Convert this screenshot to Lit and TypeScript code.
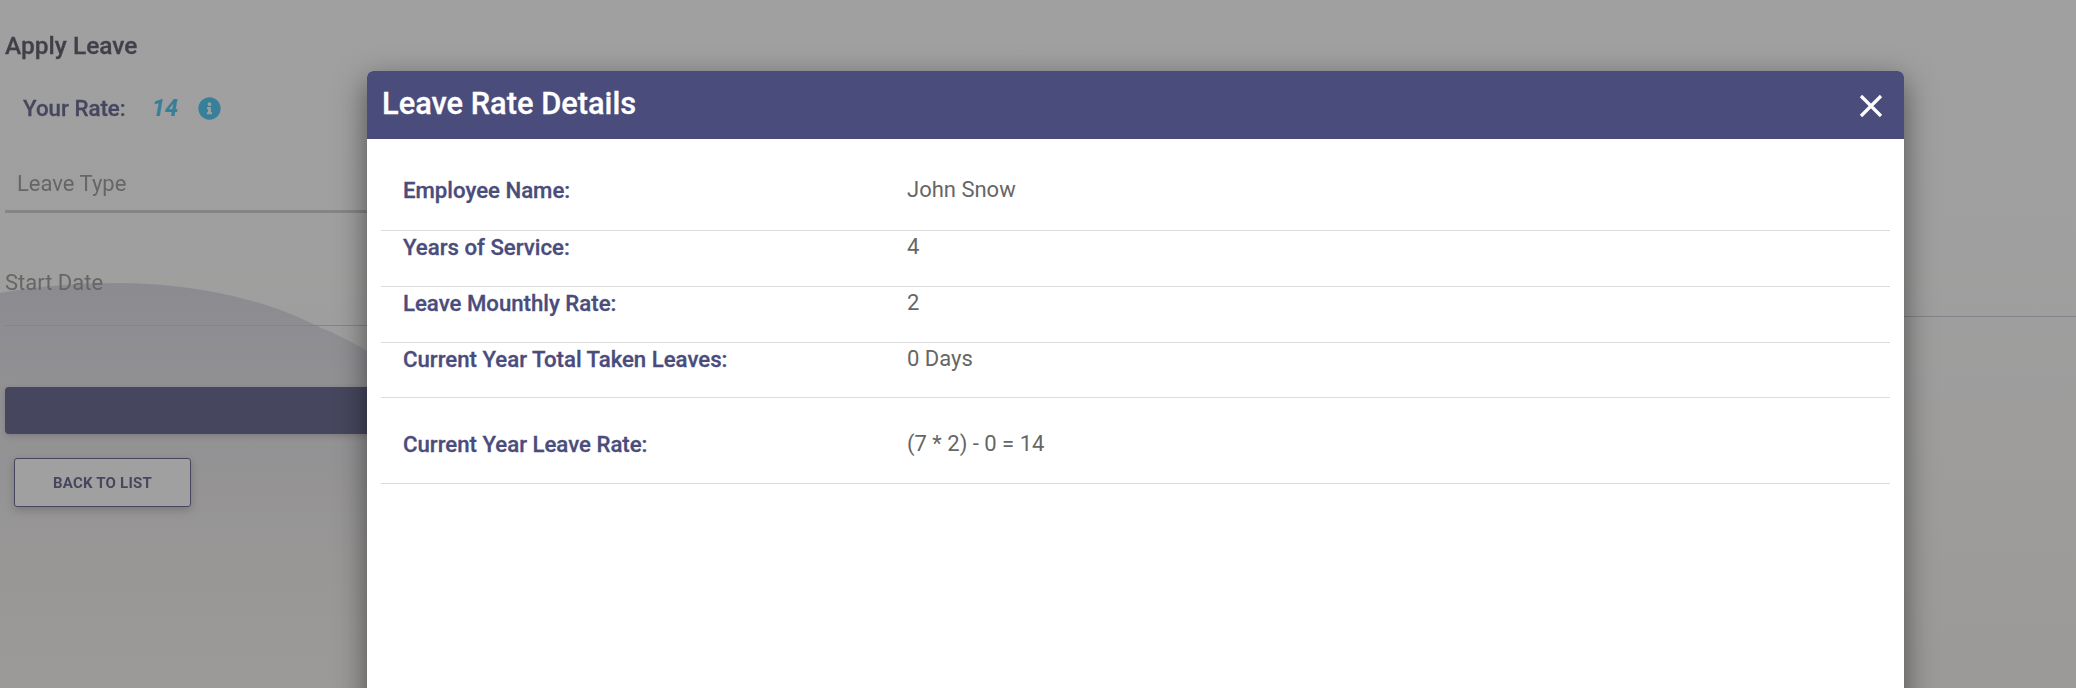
import { LitElement, html, css } from "lit";
import { customElement } from "lit/decorators.js";

const rows: [string, string, string][] = [
  ["Employee Name:", "John Snow", "first"],
  ["Years of Service:", "4", ""],
  ["Leave Mounthly Rate:", "2", ""],
  ["Current Year Total Taken Leaves:", "0 Days", "short"],
  ["Current Year Leave Rate:", "(7 * 2) - 0 = 14", "total"],
];

@customElement("app-root")
export class AppRoot extends LitElement {
  static styles = css`
    :host { display: block; position: relative; width: 100%; height: 688px; overflow: hidden; font-family: Roboto, "Liberation Sans", sans-serif; }
    * { box-sizing: border-box; }
    .page { position: relative; height: 688px; padding: 0 0 0 5px; background: linear-gradient(180deg, #fefefe 0%, #fdfdfd 35%, #f6f2ee 100%); overflow: hidden; }
    .wave { position: absolute; left: 0; top: 280px; width: 700px; height: 408px; }
    .content { position: relative; filter: blur(.35px); }
    h2 { margin: 0; padding-top: 31px; height: 78px; font-size: 24.5px; line-height: 30px; font-weight: 500; color: #3f3f4f; -webkit-text-stroke: .3px currentColor; }
    .rate { display: flex; align-items: center; height: 60px; padding-left: 18px; }
    .rate .lbl { width: 129px; font-size: 22.3px; font-weight: 500; color: #4a4c7b; -webkit-text-stroke: .3px currentColor; }
    .rate .num { width: 46px; font-size: 23.5px; font-weight: 700; font-style: italic; color: #2ebcf2; -webkit-text-stroke: .2px currentColor; }
    .rate svg { width: 23px; height: 23px; fill: #2ebcf2; display: block; }
    .field { height: 75px; margin-right: 1046px; border-bottom: 3px solid #c8c8c8; padding: 31px 0 0 12px; font-size: 22px; line-height: 30px; color: #8a8a8a; }
    .dates { display: grid; grid-template-columns: 1025px 1fr; height: 113px; }
    .date { height: 113px; padding-top: 55px; font-size: 22px; line-height: 30px; color: #8a8a8a; border-bottom: 1px solid #c4c4d0; }
    .date.right { height: 104px; padding: 0; }
    .bar { height: 47px; margin: 61px 1046px 0 0; border-radius: 4px; background: #4a4c7b; box-shadow: 0 2px 6px rgba(0,0,0,.2); }
    .back { display: flex; align-items: center; justify-content: center; width: 177px; height: 49px; margin: 24px 0 0 9px; border: 1px solid #4a4c7b; border-radius: 3px; background: #fff; color: #4a4c7b; font-size: 15px; font-weight: 700; letter-spacing: .2px; text-transform: uppercase; box-shadow: 0 3px 8px rgba(0,0,0,.25); }
    .overlay { position: absolute; inset: 0; background: rgba(65,65,65,.5); }
    .modal { position: absolute; left: 367px; top: 71px; width: 1537px; height: 700px; background: #fff; border-radius: 6px 6px 0 0; box-shadow: 0 10px 30px rgba(0,0,0,.5); }
    .head { display: flex; align-items: center; justify-content: space-between; height: 68px; padding: 0 21px 3px 15px; background: #4a4c7b; border-radius: 6px 6px 0 0; color: #fff; font-size: 30.8px; font-weight: 500; -webkit-text-stroke: .3px currentColor; }
    .head svg { width: 24px; height: 24px; display: block; stroke: #fff; stroke-width: 3.2; fill: none; margin: 5px 0 0; }
    .body { padding: 36px 14px 0; }
    .row { display: grid; grid-template-columns: 503px 1fr; height: 56px; padding: 1px 0 0 22px; border-bottom: 1px solid #dcdcdc; font-size: 22px; line-height: 30px; }
    .row.first { height: 56px; padding-top: 0; }
    .row.short { height: 55px; }
    .row.total { height: 86px; padding-top: 31px; }
    .row b { font-weight: 500; color: #4a4c7b; font-size: 22.2px; -webkit-text-stroke: .3px currentColor; }
    .row span { color: #666; padding-left: 1px; }
  `;

  render() {
    return html`
      <div class="page">
        <svg class="wave" viewBox="0 0 700 408" preserveAspectRatio="none">
          <defs><linearGradient id="w" x1="0" y1="0" x2="0" y2="1">
            <stop offset="0" stop-color="#d6d4de"/><stop offset=".45" stop-color="#dedbe0" stop-opacity=".7"/><stop offset="1" stop-color="#e8e2dc" stop-opacity="0"/>
          </linearGradient></defs>
          <path d="M0 13 C40 6 80 3 115 3 C200 3 270 22 315 45 C345 58 365 68 400 92 L700 300 L700 408 L0 408 Z" fill="url(#w)"/>
        </svg>
        <div class="content">
          <h2>Apply Leave</h2>
          <div class="rate">
            <div class="lbl">Your Rate:</div>
            <div class="num">14</div>
            <svg viewBox="0 0 512 512"><path d="M256 8C119.043 8 8 119.083 8 256c0 136.997 111.043 248 248 248s248-111.003 248-248C504 119.083 392.957 8 256 8zm0 110c23.196 0 42 18.804 42 42s-18.804 42-42 42-42-18.804-42-42 18.804-42 42-42zm56 254c0 6.627-5.373 12-12 12h-88c-6.627 0-12-5.373-12-12v-24c0-6.627 5.373-12 12-12h12v-64h-12c-6.627 0-12-5.373-12-12v-24c0-6.627 5.373-12 12-12h64c6.627 0 12 5.373 12 12v100h12c6.627 0 12 5.373 12 12v24z"/></svg>
          </div>
          <div class="field">Leave Type</div>
          <div class="dates">
            <div class="date">Start Date</div>
            <div class="date right"></div>
          </div>
          <div class="bar"></div>
          <div class="back">Back to list</div>
        </div>
      </div>
      <div class="overlay"></div>
      <div class="modal">
        <div class="head">
          <span>Leave Rate Details</span>
          <svg viewBox="0 0 24 24"><path d="M2 2 L22 22 M22 2 L2 22"/></svg>
        </div>
        <div class="body">
          ${rows.map(([a, b, c]) => html`<div class="row ${c}"><b>${a}</b><span>${b}</span></div>`)}
        </div>
      </div>
    `;
  }
}
